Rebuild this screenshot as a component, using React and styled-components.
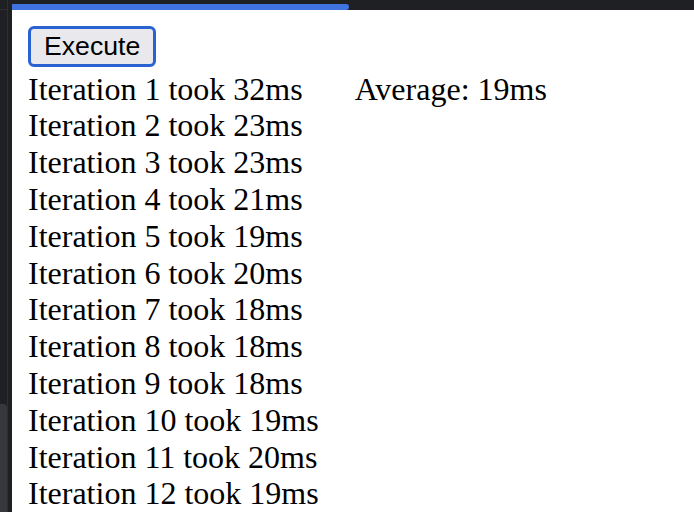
import React from 'react'
import styled, { createGlobalStyle } from 'styled-components'

const GlobalStyle = createGlobalStyle`
  html, body {
    margin: 0;
    padding: 0;
    overflow: hidden;
    background: #1f2023;
  }
`

const Frame = styled.div`
  display: flex;
  width: 694px;
  height: 512px;
  background: #1f2023;
`

const Gutter = styled.div`
  width: 12px;
  display: flex;
  flex-direction: column;
`

const GutterCorner = styled.div`
  height: 9px;
  width: 7px;
  border-right: 1px solid #2e2f33;
  border-bottom: 1px solid #2e2f33;
`

const GutterRail = styled.div`
  flex: 1;
  width: 7px;
  border-right: 1px solid #2e2f33;
  display: flex;
  flex-direction: column;
  justify-content: flex-end;
`

const GutterPanel = styled.div`
  height: 108px;
  width: 7px;
  background: #37383c;
  border-top-right-radius: 4px;
`

const Main = styled.div`
  flex: 1;
  display: flex;
  flex-direction: column;
`

const TopStrip = styled.div`
  height: 10px;
  padding-top: 4px;
  box-sizing: border-box;
`

const ProgressBar = styled.div`
  width: 337px;
  height: 6px;
  background: #3f74e0;
  border-radius: 0 3px 3px 0;
`

const Content = styled.div`
  flex: 1;
  background: #ffffff;
  padding: 16px;
  font-family: "Liberation Serif", "Times New Roman", serif;
  font-size: 32px;
  color: #000;
`

const ExecuteButton = styled.button`
  font-family: "Liberation Sans", Arial, sans-serif;
  font-size: 26.67px;
  line-height: 1.15;
  color: #000;
  background: #e9e9ed;
  border: 3px solid #2a62d2;
  border-radius: 6px;
  padding: 2px 13px;
  margin: 0;
  display: block;
`

const Results = styled.div`
  display: flex;
  gap: 36px;
  align-items: flex-start;
  margin-top: 4px;
`

const Iterations = styled.div`
  display: flex;
  flex-direction: column;
`

const Line = styled.div`
  line-height: 1.15;
  white-space: nowrap;
`

const timings = [32, 23, 23, 21, 19, 20, 18, 18, 18, 19, 20, 19]

export default function App() {
  return (
    <>
      <GlobalStyle />
      <Frame>
        <Gutter>
          <GutterCorner />
          <GutterRail>
            <GutterPanel />
          </GutterRail>
        </Gutter>
        <Main>
          <TopStrip>
            <ProgressBar />
          </TopStrip>
          <Content>
            <ExecuteButton>Execute</ExecuteButton>
            <Results>
              <Iterations>
                {timings.map((ms, i) => (
                  <Line key={i}>Iteration {i + 1} took {ms}ms</Line>
                ))}
              </Iterations>
              <Line>Average: 19ms</Line>
            </Results>
          </Content>
        </Main>
      </Frame>
    </>
  )
}
